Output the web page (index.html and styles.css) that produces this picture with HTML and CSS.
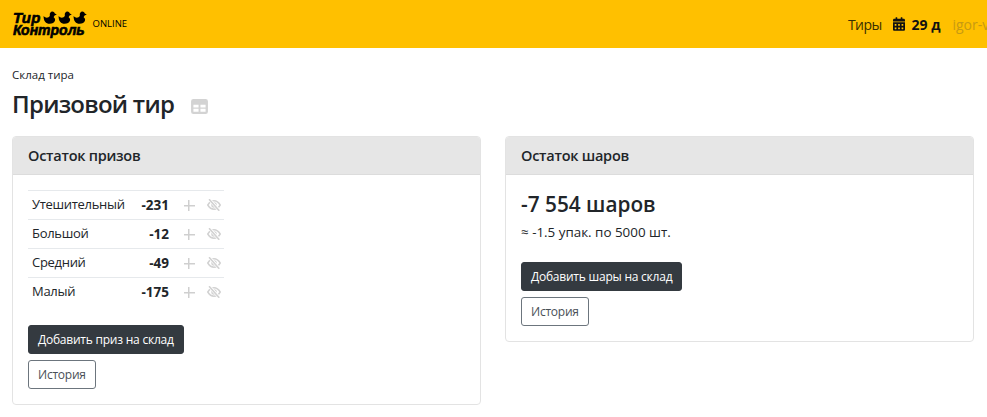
FILE: index.html
```html
<!DOCTYPE html>
<html lang="ru">
<head>
<meta charset="utf-8">
<title>Призовой тир</title>
<link rel="stylesheet" href="styles.css">
</head>
<body>
<svg class="defs" width="0" height="0"><defs>
<symbol id="duck" viewBox="0 0 14 13"><path d="M.6 5C2.200 6.800 4 7 5.500 6.200C6.500 5.700 7 5 6.800 4C6.500 2.400 7.600 .5 9.400 .5C10.800 .5 11.600 1.500 11.800 2.600L13.800 3.500L11.600 4.500C11.200 5.400 10.600 5.900 10.800 6.600C11.800 7.200 12.400 8.200 12 9.600C11.400 11.800 9.200 12.800 6.600 12.800C3 12.800 .4 10 .6 5Z"/></symbol>
<symbol id="eye-off" viewBox="0 0 14 12"><g fill="none" stroke="currentColor" stroke-width="1.500" stroke-linecap="round"><path d="M.8 6C2.500 3.200 4.600 1.800 7 1.800S11.500 3.200 13.200 6C11.500 8.800 9.400 10.200 7 10.200S2.500 8.800 .8 6Z"/><circle cx="7" cy="6" r="2"/><path d="M2.200 .2L12.500 11.800" stroke="#fff" stroke-width="3"/><path d="M2.500 .8L11.800 11.200" stroke-width="1.700"/></g></symbol>
</defs></svg>
<header class="navbar">
  <div class="brand">
    <div class="logo">
      <div class="logo-top"><span>Тир</span>
        <svg class="duck"><use href="#duck"/></svg><svg class="duck"><use href="#duck"/></svg><svg class="duck"><use href="#duck"/></svg>
      </div>
      <div class="logo-bottom">Контроль</div>
    </div>
    <span class="online">ONLINE</span>
  </div>
  <nav class="nav">
    <span class="nav-link">Тиры</span>
    <span class="days">
      <svg class="cal" viewBox="0 0 448 512"><path d="M0 464c0 26.500 21.500 48 48 48h352c26.500 0 48-21.500 48-48V192H0v272zm320-196c0-6.600 5.400-12 12-12h40c6.600 0 12 5.400 12 12v40c0 6.600-5.400 12-12 12h-40c-6.600 0-12-5.400-12-12v-40zm0 128c0-6.600 5.400-12 12-12h40c6.600 0 12 5.400 12 12v40c0 6.600-5.400 12-12 12h-40c-6.600 0-12-5.400-12-12v-40zM192 268c0-6.600 5.400-12 12-12h40c6.600 0 12 5.400 12 12v40c0 6.600-5.400 12-12 12h-40c-6.600 0-12-5.400-12-12v-40zm0 128c0-6.600 5.400-12 12-12h40c6.600 0 12 5.400 12 12v40c0 6.600-5.400 12-12 12h-40c-6.600 0-12-5.400-12-12v-40zM64 268c0-6.600 5.400-12 12-12h40c6.600 0 12 5.400 12 12v40c0 6.600-5.400 12-12 12H76c-6.600 0-12-5.400-12-12v-40zm0 128c0-6.600 5.400-12 12-12h40c6.600 0 12 5.400 12 12v40c0 6.600-5.400 12-12 12H76c-6.600 0-12-5.400-12-12v-40zM400 64h-48V16c0-8.800-7.200-16-16-16h-32c-8.800 0-16 7.200-16 16v48H160V16c0-8.800-7.200-16-16-16h-32c-8.800 0-16 7.200-16 16v48H48C21.500 64 0 85.500 0 112v48h448v-48c0-26.500-21.500-48-48-48z"/></svg>
      <span>29 д</span>
    </span>
    <span class="user">igor-v</span>
  </nav>
</header>
<main class="content">
  <div class="crumb">Склад тира</div>
  <div class="title-row">
    <h1 class="title">Призовой тир</h1>
    <svg class="table-icon" viewBox="0 0 18 16"><path fill-rule="evenodd" d="M2.500 0h13A2.500 2.500 0 0 1 18 2.500v11a2.500 2.500 0 0 1-2.500 2.500h-13A2.500 2.500 0 0 1 0 13.500v-11A2.500 2.500 0 0 1 2.500 0ZM2.500 6v3h5.500V6H2.500Zm7.500 0v3h5.500V6H10ZM2.500 10.500v3h5.500v-3H2.500Zm7.500 0v3h5.500v-3H10Z"/></svg>
  </div>
  <div class="cards">
    <section class="card">
      <h2 class="card-header">Остаток призов</h2>
      <div class="card-body">
        <table class="stock">
          <tr><td class="name">Утешительный</td><td class="num">-231</td><td class="act"><span class="plus"></span></td><td class="act"><svg class="eye"><use href="#eye-off"/></svg></td></tr>
          <tr><td class="name">Большой</td><td class="num">-12</td><td class="act"><span class="plus"></span></td><td class="act"><svg class="eye"><use href="#eye-off"/></svg></td></tr>
          <tr><td class="name">Средний</td><td class="num">-49</td><td class="act"><span class="plus"></span></td><td class="act"><svg class="eye"><use href="#eye-off"/></svg></td></tr>
          <tr><td class="name">Малый</td><td class="num">-175</td><td class="act"><span class="plus"></span></td><td class="act"><svg class="eye"><use href="#eye-off"/></svg></td></tr>
        </table>
        <div class="actions prizes">
          <button class="btn btn-dark">Добавить приз на склад</button>
          <button class="btn btn-outline">История</button>
        </div>
      </div>
    </section>
    <section class="card">
      <h2 class="card-header">Остаток шаров</h2>
      <div class="card-body">
        <div class="balls">-7 554 шаров</div>
        <div class="packs">≈ -1.5 упак. по 5000 шт.</div>
        <div class="actions balls-actions">
          <button class="btn btn-dark">Добавить шары на склад</button>
          <button class="btn btn-outline">История</button>
        </div>
      </div>
    </section>
  </div>
</main>
</body>
</html>
```
FILE: styles.css
```css
* { box-sizing: border-box; }
html, body { margin: 0; padding: 0; }
body {
  font-family: "Open Sans", "Noto Sans", sans-serif;
  font-size: 13px;
  line-height: 1.5;
  color: #212529;
  background: #fff;
  overflow: hidden;
}
.defs { display: block; height: 0; }
.navbar {
  height: 48px;
  background: #ffc000;
  display: flex;
  align-items: center;
  justify-content: space-between;
  padding: 0 0 0 13px;
  overflow: hidden;
}
.brand { display: flex; align-items: center; gap: 6px; }
.logo {
  font-family: "Liberation Sans", sans-serif;
  font-weight: 700;
  font-style: italic;
  color: #000;
  font-size: 14px;
  line-height: 13px;
  -webkit-text-stroke: .6px #000;
}
.logo-top { display: flex; align-items: center; gap: 1px; height: 13px; }
.logo-top span { margin-right: 1px; font-size: 15px; letter-spacing: .2px; }
.logo-bottom { height: 13px; }
.duck { width: 14px; height: 13px; fill: #000; }
.online { font-size: 9.500px; color: #000; }
.nav { display: flex; align-items: center; white-space: nowrap; font-size: 14px; width: 139px; flex: none; }
.nav-link { color: #3a3000; letter-spacing: -.6px; }
.days { display: flex; align-items: center; gap: 7px; font-weight: 700; color: #111; margin-left: 11px; }
.cal { width: 12px; height: 14px; fill: #111; }
.user { color: #c79a12; margin-left: 12px; }
.content { padding: 18px 13px 0 12px; }
.crumb { font-size: 11.500px; line-height: 17px; color: #212529; }
.title-row { display: flex; align-items: center; gap: 17px; margin-top: 6px; height: 30px; }
.title { margin: 0; font-size: 24px; line-height: 30px; font-weight: 600; color: #212529; letter-spacing: -.75px; }
.table-icon { width: 17px; height: 15px; fill: #d3d3d3; margin-top: 4px; }
.cards { display: flex; align-items: flex-start; gap: 24px; margin-top: 17px; }
.card { flex: 1 1 0; min-width: 0; border: 1px solid #e3e3e3; border-radius: 4px; background: #fff; overflow: hidden; }
.card-header {
  margin: 0;
  height: 38px;
  padding: 0 15px;
  background: #e6e6e6;
  border-bottom: 1px solid #dcdcdc;
  font-size: 14.500px;
  line-height: 38px;
  font-weight: 600;
  color: #212529;
  letter-spacing: -.25px;
}
.card-body { padding: 15px; }
.stock { border-collapse: separate; border-spacing: 0; width: 196px; table-layout: fixed; }
.stock td { height: 29px; padding: 0; border-top: 1px solid #e6e9ec; font-size: 13px; }
.stock .name { padding-left: 4px; letter-spacing: -.3px; white-space: nowrap; }
.stock .num { width: 50px; text-align: right; font-weight: 700; font-size: 13.500px; padding-right: 5px; }
.stock .act { width: 30px; text-align: center; }
.stock .act + .act { width: 20px; }
.plus { display: inline-block; width: 11px; height: 11px; vertical-align: middle;
  background:
    linear-gradient(#cfcfcf, #cfcfcf) center / 100% 1.500px no-repeat,
    linear-gradient(#cfcfcf, #cfcfcf) center / 1.500px 100% no-repeat; }
.eye { display: block; width: 14px; height: 12px; color: #d2d2d2; margin: -1px auto 0; }
.actions { display: flex; flex-direction: column; align-items: flex-start; gap: 6px; }
.prizes { margin-top: 19px; }
.balls-actions { margin-top: 20px; }
.btn {
  font-family: inherit;
  height: 29px;
  font-size: 12px;
  line-height: 1;
  padding: 0 9px;
  border-radius: 3px;
  letter-spacing: -.23px;
  cursor: pointer;
}
.btn-dark { background: #343a40; border: 1px solid #343a40; color: #fff; }
.btn-outline { background: #fff; border: 1px solid #6c757d; color: #495057; }
.balls { font-size: 20.800px; line-height: 30px; font-weight: 600; color: #212529; margin-top: -1px; }
.packs { font-size: 13.400px; line-height: 20px; margin-top: 3px; color: #212529; }
```
